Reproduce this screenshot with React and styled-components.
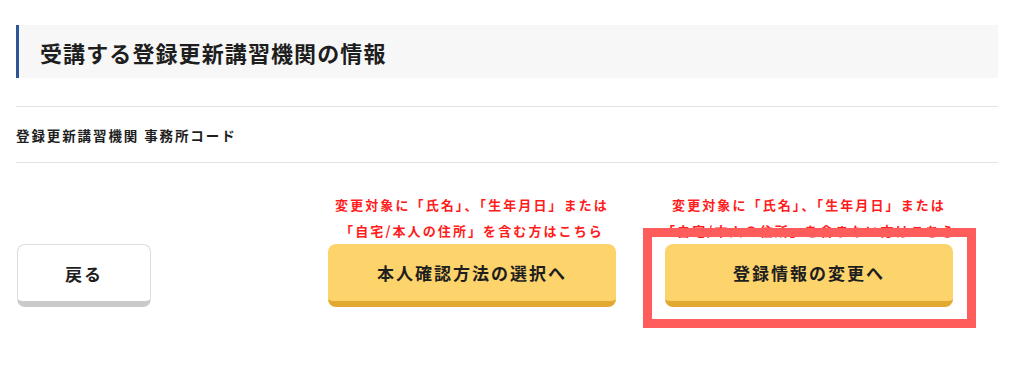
import styled, { createGlobalStyle } from "styled-components";

const Global = createGlobalStyle`
  body {
    margin: 0;
    background: #ffffff;
    font-family: "Noto Sans CJK JP", "Noto Sans", sans-serif;
    color: #1e1e1e;
  }
`;

const Page = styled.div`
  box-sizing: border-box;
  width: 998px;
  min-height: 376px;
  padding: 25px 0 0 16px;
`;

const Heading = styled.h2`
  margin: 0;
  height: 53px;
  display: flex;
  align-items: center;
  padding-left: 21px;
  background: #f7f7f7;
  border-left: 3px solid #2c5696;
  font-size: 22px;
  font-weight: 700;
  letter-spacing: 1.1px;
`;

const FieldRow = styled.div`
  margin-top: 28px;
  height: 55px;
  display: flex;
  align-items: center;
  border-top: 1.5px solid #e3e3e3;
  border-bottom: 1.5px solid #e3e3e3;
  font-size: 13.5px;
  font-weight: 700;
  letter-spacing: 1.9px;
`;

const Actions = styled.div`
  display: flex;
  align-items: flex-end;
  padding-top: 29px;
`;

const Group = styled.div`
  display: flex;
  align-items: flex-end;
  gap: 49px;
  margin-left: 177px;
`;

const Column = styled.div`
  display: flex;
  flex-direction: column;
  align-items: center;
  width: 288px;
`;

const Note = styled.p`
  margin: 0;
  color: #ff1c1c;
  font-size: 13px;
  font-weight: 700;
  line-height: 26px;
  letter-spacing: 2.1px;
  text-align: center;
  white-space: nowrap;
`;

const Button = styled.button`
  box-sizing: border-box;
  width: ${({ $wide }) => ($wide ? "288px" : "134px")};
  height: 63px;
  margin-left: ${({ $wide }) => ($wide ? "0" : "1px")};
  border-radius: 8px;
  border: ${({ $wide }) => ($wide ? "none" : "1px solid #dddddd")};
  border-bottom: 6px solid ${({ $wide }) => ($wide ? "#e2a930" : "#cacaca")};
  background: ${({ $wide }) => ($wide ? "#fdd36c" : "#ffffff")};
  font-family: inherit;
  font-size: 17px;
  font-weight: 700;
  letter-spacing: 2px;
  color: #1e1e1e;
  padding: 0;
  cursor: pointer;
`;

const Highlight = styled.div`
  position: relative;
  display: flex;
`;

const Frame = styled.span`
  position: absolute;
  top: -16px;
  left: -22px;
  right: -23px;
  bottom: -21px;
  border: 9px solid #ff5c5c;
  pointer-events: none;
`;

export default function App() {
  return (
    <>
      <Global />
      <Page>
        <Heading>受講する登録更新講習機関の情報</Heading>
        <FieldRow>登録更新講習機関 事務所コード</FieldRow>
        <Actions>
          <Button>戻る</Button>
          <Group>
            <Column>
              <Note>
                変更対象に「氏名」、「生年月日」または
                <br />
                「自宅/本人の住所」を含む方はこちら
              </Note>
              <Button $wide>本人確認方法の選択へ</Button>
            </Column>
            <Column>
              <Note>
                変更対象に「氏名」、「生年月日」または
                <br />
                「自宅/本人の住所」を含まない方はこちら
              </Note>
              <Highlight>
                <Button $wide>登録情報の変更へ</Button>
                <Frame />
              </Highlight>
            </Column>
          </Group>
        </Actions>
      </Page>
    </>
  );
}
